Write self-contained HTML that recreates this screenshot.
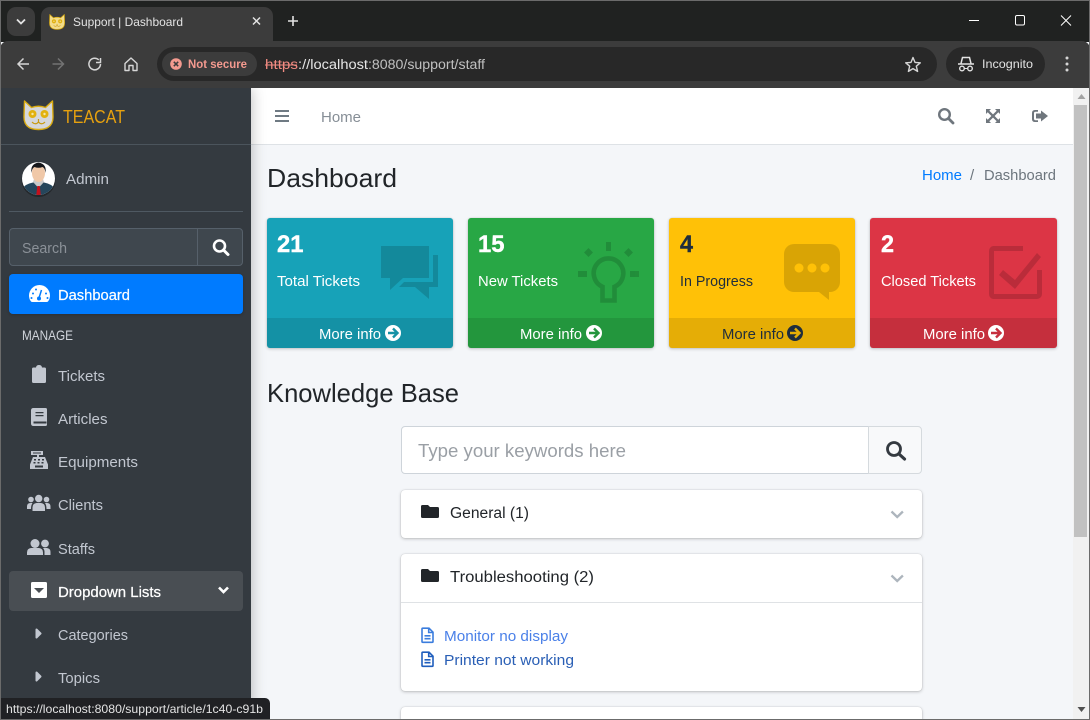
<!DOCTYPE html>
<html lang="en">
<head>
<meta charset="utf-8">
<title>Support | Dashboard</title>
<style>
html,body{margin:0;padding:0;width:1090px;height:720px;overflow:hidden;background:#f4f6f9}
#w{position:relative;width:1090px;height:720px;overflow:hidden}
.b{position:absolute;box-sizing:border-box}
svg.o{position:absolute;left:0;top:0;display:block;font-family:"Liberation Sans",sans-serif}
.card{border-radius:3px;box-shadow:0 0 1px rgba(0,0,0,.2),0 1px 3px rgba(0,0,0,.2);overflow:hidden}
.card i{position:absolute;left:0;right:0;top:100px;bottom:0;background:rgba(0,0,0,.1)}
.kb{background:#fff;border-radius:4px;box-shadow:0 0 1px rgba(0,0,0,.22),0 1px 3px rgba(0,0,0,.22)}
</style>
</head>
<body>
<div id="w">
<!-- page -->
<div class="b" style="left:0;top:88px;width:1073px;height:632px;background:#f4f6f9"></div>
<div class="b" style="left:251px;top:88px;width:822px;height:57px;background:#fff;border-bottom:1px solid #dee2e6"></div>

<!-- sidebar -->
<div class="b" style="left:0;top:88px;width:251px;height:632px;background:#343a40;box-shadow:0 0 14px rgba(0,0,0,.28)"></div>

<!-- browser chrome -->
<div class="b" style="left:0;top:0;width:1090px;height:42px;background:#202221"></div>
<div class="b" style="left:7px;top:7px;width:28px;height:29px;background:#3c3c3c;border-radius:9px"></div>
<div class="b" style="left:41px;top:7px;width:232px;height:36px;background:#3c3c3c;border-radius:9px 9px 0 0"></div>
<div class="b" style="left:0;top:41px;width:1090px;height:47px;background:#3c3c3c;border-radius:8px 8px 0 0"></div>
<div class="b" style="left:157px;top:47px;width:780px;height:34px;background:#282828;border-radius:17px"></div>
<div class="b" style="left:162px;top:52px;width:95px;height:24px;background:#3c3c3c;border-radius:12px"></div>
<div class="b" style="left:946px;top:47px;width:99px;height:34px;background:#282828;border-radius:17px"></div>

<!-- sidebar parts -->
<div class="b" style="left:1px;top:144px;width:250px;height:1px;background:#4b545c"></div>
<div class="b" style="left:9px;top:211px;width:234px;height:1px;background:#4f5962"></div>
<div class="b" style="left:9px;top:228px;width:234px;height:38px;background:#3f474e;border:1px solid #56606a;border-radius:4px"></div>
<div class="b" style="left:197px;top:228px;width:1px;height:38px;background:#56606a"></div>
<div class="b" style="left:9px;top:274px;width:234px;height:40px;background:#007bff;border-radius:4px;box-shadow:0 1px 3px rgba(0,0,0,.2)"></div>
<div class="b" style="left:9px;top:571px;width:234px;height:40px;background:#494e53;border-radius:4px"></div>

<!-- small boxes -->
<div class="b card" style="left:267px;top:218px;width:186px;height:130px;background:#17a2b8"><i></i></div>
<div class="b card" style="left:468px;top:218px;width:186px;height:130px;background:#28a745"><i></i></div>
<div class="b card" style="left:669px;top:218px;width:186px;height:130px;background:#ffc107"><i></i></div>
<div class="b card" style="left:870px;top:218px;width:187px;height:130px;background:#dc3545"><i></i></div>

<!-- knowledge base -->
<div class="b" style="left:401px;top:426px;width:468px;height:48px;background:#fff;border:1px solid #ced4da;border-radius:4px 0 0 4px"></div>
<div class="b" style="left:868px;top:426px;width:54px;height:48px;background:#f8f9fa;border:1px solid #d5dade;border-radius:0 4px 4px 0"></div>
<div class="b kb" style="left:401px;top:490px;width:521px;height:48px"></div>
<div class="b kb" style="left:401px;top:554px;width:521px;height:137px"></div>
<div class="b" style="left:401px;top:602px;width:521px;height:1px;background:#dfe2e5"></div>
<div class="b kb" style="left:401px;top:707px;width:521px;height:13px;border-radius:4px 4px 0 0"></div>

<!-- scrollbar -->
<div class="b" style="left:1073px;top:88px;width:16px;height:632px;background:#f1f1f1"></div>
<div class="b" style="left:1074px;top:105px;width:13px;height:432px;background:#c1c1c1"></div>

<!-- status bubble -->
<div class="b" style="left:0;top:698px;width:270px;height:22px;background:#202124;border-radius:0 5px 0 0"></div>

<svg class="o" width="1090" height="720" viewBox="0 0 1090 720" xmlns="http://www.w3.org/2000/svg">
<defs>
<g id="cat">
  <path d="M1.500 1 L8.500 7.500 Q15.500 5 22.500 7.500 L29.500 1 L30 17 Q30 29.500 15.500 29.500 Q1 29.500 1 17 Z" fill="currentColor" stroke="#d9ab12" stroke-width="1.400" stroke-linejoin="round"/>
  <circle cx="9.500" cy="14" r="4" fill="#e2b10f"/><circle cx="21.500" cy="14" r="4" fill="#e2b10f"/>
  <circle cx="9.500" cy="14" r="1.200" fill="#f5e7a8"/><circle cx="21.500" cy="14" r="1.200" fill="#f5e7a8"/>
  <path d="M15.500 19v3M9 22q3.500 3.500 6.500 0q3 3.500 6.500 0" fill="none" stroke="#c99a10" stroke-width="1.200"/>
</g>
<g id="fold"><path d="M0 1.500A1.500 1.500 0 0 1 1.500 0H7l2 2h7.500A1.500 1.500 0 0 1 18 3.500v8A1.500 1.500 0 0 1 16.500 13h-15A1.500 1.500 0 0 1 0 11.500Z"/></g>
<g id="filei" fill="none" stroke-width="1.600"><path d="M1 1.500Q1 .7 1.800 .7H8L12 4.700V14Q12 14.800 11.200 14.800H1.800Q1 14.800 1 14Z"/><path d="M7.700 1V5H11.700M3.500 8.300H9.500M3.500 11.200H9.500"/></g>
</defs>

<!-- tab strip -->
<path d="M17 19.500l4 4 4-4" fill="none" stroke="#e3e3e3" stroke-width="1.800"/>
<g transform="translate(49,14) scale(.52)" color="#f3dc8a"><use href="#cat"/></g>
<text x="73" y="26" font-size="12" fill="#e3e3e3" textLength="110" lengthAdjust="spacingAndGlyphs">Support | Dashboard</text>
<path d="M253 17.500l7 7m0-7l-7 7" stroke="#e3e3e3" stroke-width="1.500" fill="none"/>
<path d="M293 16v10M288 21h10" stroke="#e3e3e3" stroke-width="1.600" fill="none"/>
<path d="M969 20.500h10" stroke="#fff" stroke-width="1"/>
<rect x="1015.500" y="15.500" width="9" height="9.500" rx="1.500" fill="none" stroke="#fff"/>
<path d="M1061 15.500l10 10m0-10l-10 10" stroke="#fff" stroke-width="1" fill="none"/>

<!-- toolbar -->
<path d="M29 64H18.500M23.500 58.500L18 64l5.500 5.500" fill="none" stroke="#d6d6d6" stroke-width="1.500"/>
<path d="M52.500 64H63M58 58.500L63.500 64 58 69.500" fill="none" stroke="#737373" stroke-width="1.500"/>
<path d="M100.500 64a5.800 5.800 0 1 1-1.700-4.100M100.500 58v4.500H96" fill="none" stroke="#d6d6d6" stroke-width="1.500"/>
<path d="M125 63.500L131 58l6 5.500V70.500H133V65.500H129V70.500H125Z" fill="none" stroke="#d6d6d6" stroke-width="1.400" stroke-linejoin="round"/>
<circle cx="176" cy="64" r="5.800" fill="#f49a8f"/><path d="M173.800 61.800l4.400 4.400m0-4.400l-4.400 4.400" stroke="#3c3c3c" stroke-width="1.500"/>
<text x="188" y="68" font-size="11.500" font-weight="bold" fill="#f49a8f" textLength="59" lengthAdjust="spacingAndGlyphs">Not secure</text>
<text x="265" y="69" font-size="13.500" fill="#f28b82" textLength="33" lengthAdjust="spacingAndGlyphs">https</text>
<path d="M265 65h32" stroke="#f28b82" stroke-width="1"/>
<text x="298" y="69" font-size="13.500" fill="#e6e6e6" textLength="70" lengthAdjust="spacingAndGlyphs">://localhost</text>
<text x="368" y="69" font-size="13.500" fill="#c0c0c0" textLength="117" lengthAdjust="spacingAndGlyphs">:8080/support/staff</text>
<path d="M913 57.500l2 4.900 5.300.4-4 3.400 1.300 5.200-4.600-2.800-4.600 2.800 1.300-5.200-4-3.400 5.300-.4Z" fill="none" stroke="#d6d6d6" stroke-width="1.400" stroke-linejoin="round"/>
<path d="M958 64h16M961 63.500l1.500-6h7l1.500 6" fill="none" stroke="#e3e3e3" stroke-width="1.500"/>
<circle cx="962" cy="68.500" r="2.300" fill="none" stroke="#e3e3e3" stroke-width="1.400"/><circle cx="970" cy="68.500" r="2.300" fill="none" stroke="#e3e3e3" stroke-width="1.400"/><path d="M964.300 68.500h3.400" stroke="#e3e3e3"/>
<text x="982" y="68" font-size="12" fill="#e3e3e3" textLength="51" lengthAdjust="spacingAndGlyphs">Incognito</text>
<circle cx="1067" cy="58" r="1.500" fill="#d6d6d6"/><circle cx="1067" cy="64" r="1.500" fill="#d6d6d6"/><circle cx="1067" cy="70" r="1.500" fill="#d6d6d6"/>

<!-- brand -->
<g transform="translate(23,100)" color="#d6d7da"><use href="#cat"/></g>
<text x="63" y="123" font-size="18.500" fill="#e5a00f" textLength="62" lengthAdjust="spacingAndGlyphs">TEACAT</text>

<!-- user -->
<circle cx="38.500" cy="180" r="17" fill="#000" opacity=".3"/>
<clipPath id="av"><circle cx="38.500" cy="178.500" r="16.500"/></clipPath>
<g clip-path="url(#av)">
  <rect x="22" y="162" width="33" height="33" fill="#fff"/>
  <path d="M22 195v-6q3-5 11-6.500h11q8 1.500 11 6.500v6Z" fill="#25465c"/>
  <path d="M33 182l5.500 6 5.500-6-1-3h-9Z" fill="#c9c9c9"/>
  <path d="M37.300 186h2.500l1 9h-4.500Z" fill="#c4101c"/>
  <ellipse cx="38.500" cy="173" rx="6.500" ry="9" fill="#f0c8a8"/>
  <path d="M31.500 173q-1.500-9 7-10.500q8.500 1.500 7 10.500q-.5-5-3-6q-4 1.500-8 0q-2.500 1-3 6Z" fill="#15161a"/>
</g>
<text x="66" y="184" font-size="15" fill="#c2c7d0" textLength="43" lengthAdjust="spacingAndGlyphs">Admin</text>

<!-- sidebar search -->
<text x="22" y="253" font-size="15" fill="#8b9198" textLength="45" lengthAdjust="spacingAndGlyphs">Search</text>
<circle cx="219.500" cy="246" r="5.500" fill="none" stroke="#fff" stroke-width="2.600"/><path d="M223.500 250l4.500 4.500" stroke="#fff" stroke-width="3" stroke-linecap="round"/>

<!-- dashboard item -->
<path d="M39.500 285a10.500 10.500 0 0 0-10.500 10.500q0 3.500 2 6q.5.500 1.500.5h14q1 0 1.500-.5q2-2.500 2-6A10.500 10.500 0 0 0 39.500 285Z" fill="#fff"/>
<path d="M39 298l2.500-8" stroke="#007bff" stroke-width="1.500"/><circle cx="39" cy="298.500" r="2" fill="#007bff"/>
<circle cx="33" cy="293.500" r="1" fill="#007bff"/><circle cx="36" cy="289.500" r="1" fill="#007bff"/><circle cx="46" cy="293.500" r="1" fill="#007bff"/><circle cx="31.500" cy="298" r="1" fill="#007bff"/><circle cx="47.500" cy="298" r="1" fill="#007bff"/>
<text x="58" y="300" font-size="15" fill="#fff" stroke="#fff" stroke-width=".2" textLength="72" lengthAdjust="spacingAndGlyphs">Dashboard</text>

<text x="22" y="340" font-size="14" fill="#d0d4db" textLength="51" lengthAdjust="spacingAndGlyphs">MANAGE</text>

<!-- nav icons -->
<g fill="#c2c7d0">
  <path d="M33.500 367.500h2.500q.3-2.500 3-2.500t3 2.500h2.500q1.500 0 1.500 1.500v12.500q0 1.500-1.500 1.500h-11q-1.500 0-1.500-1.500V369q0-1.500 1.500-1.500Z"/>
  <path fill-rule="evenodd" d="M33.500 408h12q1.500 0 1.500 1.500v15q0 1.500-1.500 1.500h-12q-2.500 0-2.500-2.500v-13q0-2.500 2.500-2.500ZM35.500 412v1.200h8V412ZM35.500 415v1.200h8V415ZM33.500 421.500v2h13v-2Z"/>
  <path fill-rule="evenodd" d="M31 451h12v4h-4v2h6l3 7.500v4.500H30v-4.500l3-7.500h4v-2h-6ZM33 452.500v1h8v-1ZM34 459v1.500h2V459ZM38 459v1.500h2V459ZM42 459v1.500h2V459ZM33.500 462v1.500h2V462ZM37.500 462v1.500h2V462ZM41.500 462v1.500h2V462ZM35 465.500v2h8v-2Z"/>
  <circle cx="31" cy="499.500" r="2.800"/><circle cx="46.500" cy="499.500" r="2.800"/><circle cx="38.700" cy="498.500" r="3.700"/>
  <path d="M27 509v-2.500q0-3.500 3.500-3.500h2q-1.500 2-1.500 6ZM50.500 509v-2.500q0-3.500-3.500-3.500h-2q1.500 2 1.500 6ZM32.500 511v-3.500q0-4 4-4.500h4.500q4 .5 4 4.500v3.500Z"/>
  <circle cx="35" cy="543.500" r="4.500"/><circle cx="45" cy="543.500" r="3.900"/>
  <path d="M27 555v-2.500q0-4 4-4.500h8q4 .5 4 4.500v2.500ZM44.500 555v-3q0-2.500-1.500-4h4q3.500 .5 3.500 4v3Z"/>
  <path d="M36.500 629.500l4 4-4 4Z" stroke="#c2c7d0" stroke-width="2" stroke-linejoin="round"/>
  <path d="M36.500 672.500l4 4-4 4Z" stroke="#c2c7d0" stroke-width="2" stroke-linejoin="round"/>
</g>
<path fill-rule="evenodd" d="M32.500 582h13q1.500 0 1.500 1.500v13q0 1.500-1.500 1.500h-13q-1.500 0-1.500-1.500v-13q0-1.500 1.500-1.500ZM34 588l5 5 5-5Z" fill="#fff"/>
<path d="M219 587.500l4.500 4.500 4.500-4.500" fill="none" stroke="#fff" stroke-width="2.600"/>

<g font-size="15" fill="#c2c7d0">
  <text x="58" y="381" textLength="47" lengthAdjust="spacingAndGlyphs">Tickets</text>
  <text x="58" y="424" textLength="49.500" lengthAdjust="spacingAndGlyphs">Articles</text>
  <text x="58" y="467" textLength="80" lengthAdjust="spacingAndGlyphs">Equipments</text>
  <text x="58" y="510" textLength="45" lengthAdjust="spacingAndGlyphs">Clients</text>
  <text x="58" y="554" textLength="37" lengthAdjust="spacingAndGlyphs">Staffs</text>
  <text x="58" y="640" textLength="70" lengthAdjust="spacingAndGlyphs">Categories</text>
  <text x="58" y="683" textLength="42" lengthAdjust="spacingAndGlyphs">Topics</text>
</g>
<text x="58" y="597" font-size="15" fill="#fff" stroke="#fff" stroke-width=".25" textLength="103" lengthAdjust="spacingAndGlyphs">Dropdown Lists</text>

<!-- top nav -->
<path d="M275 111h14M275 116h14M275 121h14" stroke="#6f7a83" stroke-width="2"/>
<text x="321" y="122" font-size="15" fill="#868e96" textLength="40" lengthAdjust="spacingAndGlyphs">Home</text>
<circle cx="944.500" cy="114.500" r="5.300" fill="none" stroke="#6f767d" stroke-width="2.400"/><path d="M948.500 118.500l4.500 4.500" stroke="#6f767d" stroke-width="2.800" stroke-linecap="round"/>
<g fill="#6f767d">
  <path d="M986 109h5l-1.700 1.700 3.700 3.700 3.700-3.700L995 109h5v5l-1.700-1.700-3.700 3.700 3.700 3.700 1.700-1.700v5h-5l1.700-1.700-3.700-3.700-3.700 3.700 1.700 1.700h-5v-5l1.700 1.700 3.700-3.700-3.700-3.700L986 114Z"/>
  <path d="M1041 110.500l7 5.500-7 5.500v-3h-5v-5h5Z"/>
  <path d="M1038 110v1.800h-2.500q-1.500 0-1.500 1.400v5.600q0 1.400 1.500 1.400h2.500v1.800h-3q-3 0-3-3v-6q0-3 3-3Z"/>
</g>

<!-- headers -->
<text x="267" y="187" font-size="26" fill="#212529" textLength="130" lengthAdjust="spacingAndGlyphs">Dashboard</text>
<text x="922" y="180" font-size="15" fill="#007bff" textLength="40" lengthAdjust="spacingAndGlyphs">Home</text>
<text x="970" y="180" font-size="15" fill="#6c757d">/</text>
<text x="984" y="180" font-size="15" fill="#6c757d" textLength="72" lengthAdjust="spacingAndGlyphs">Dashboard</text>

<!-- small box contents -->
<g font-weight="bold" font-size="24.500" stroke-width=".4">
  <text x="277" y="252" fill="#fff" stroke="#fff" textLength="26.500" lengthAdjust="spacingAndGlyphs">21</text>
  <text x="478" y="252" fill="#fff" stroke="#fff" textLength="26.500" lengthAdjust="spacingAndGlyphs">15</text>
  <text x="680" y="252" fill="#1f2d3d" stroke="#1f2d3d" textLength="13" lengthAdjust="spacingAndGlyphs">4</text>
  <text x="881" y="252" fill="#fff" stroke="#fff" textLength="13" lengthAdjust="spacingAndGlyphs">2</text>
</g>
<g font-size="15">
  <text x="277" y="286" fill="#fff" textLength="83" lengthAdjust="spacingAndGlyphs">Total Tickets</text>
  <text x="478" y="286" fill="#fff" textLength="80" lengthAdjust="spacingAndGlyphs">New Tickets</text>
  <text x="680" y="286" fill="#1f2d3d" textLength="73" lengthAdjust="spacingAndGlyphs">In Progress</text>
  <text x="881" y="286" fill="#fff" textLength="95" lengthAdjust="spacingAndGlyphs">Closed Tickets</text>
  <text x="319" y="339" fill="#fff" textLength="62" lengthAdjust="spacingAndGlyphs">More info</text>
  <text x="520" y="339" fill="#fff" textLength="62" lengthAdjust="spacingAndGlyphs">More info</text>
  <text x="722" y="339" fill="#1f2d3d" textLength="62" lengthAdjust="spacingAndGlyphs">More info</text>
  <text x="923" y="339" fill="#fff" textLength="62" lengthAdjust="spacingAndGlyphs">More info</text>
</g>
<circle cx="393" cy="333" r="8" fill="#fff"/><path d="M388 333h9M393 328.500l4.500 4.500-4.500 4.500" fill="none" stroke="#1592a6" stroke-width="2.400"/>
<circle cx="594" cy="333" r="8" fill="#fff"/><path d="M589 333h9M594 328.500l4.500 4.500-4.500 4.500" fill="none" stroke="#24963e" stroke-width="2.400"/>
<circle cx="795" cy="333" r="8" fill="#1f2d3d"/><path d="M790 333h9M795 328.500l4.500 4.500-4.500 4.500" fill="none" stroke="#e6ae06" stroke-width="2.400"/>
<circle cx="996" cy="333" r="8" fill="#fff"/><path d="M991 333h9M996 328.500l4.500 4.500-4.500 4.500" fill="none" stroke="#c62f3e" stroke-width="2.400"/>

<!-- decorative box icons -->
<g opacity=".15">
  <path d="M381 246h48v32h-26l-13 12v-12h-9Z"/>
  <path d="M433 255h5v32h-9v12l-14-12h-16l5-5h29Z"/>
  <rect x="606" y="242" width="5" height="9"/><rect x="578" y="271" width="9" height="6"/><rect x="630" y="271" width="9" height="6"/>
  <path d="M588.500 248l4.500 4.500-4.500 4.500-4.500-4.500ZM628.500 248l4.500 4.500-4.500 4.500-4.500-4.500Z"/>
  <path d="M602.500 286.800a14.800 14.800 0 1 1 12 0V300.500h-12Z" fill="none" stroke="#000" stroke-width="4.600"/>
  <path fill-rule="evenodd" d="M794 244h36a10 10 0 0 1 10 10v28a10 10 0 0 1-10 10h-1v8l-10-8h-25a10 10 0 0 1-10-10v-28a10 10 0 0 1 10-10ZM799 263.500a4.500 4.500 0 1 0 .01 0ZM812 263.500a4.500 4.500 0 1 0 .01 0ZM825 263.500a4.500 4.500 0 1 0 .01 0Z"/>
  <path d="M993 246h30v5h-29v43h43v-24h5v24a5 5 0 0 1-5 5h-44a5 5 0 0 1-4-5v-43a5 5 0 0 1 4-5Z"/>
  <path d="M1003 270l12 10 22-27 4 4-26 32-16-14Z"/>
</g>

<!-- knowledge base contents -->
<text x="267" y="402" font-size="26" fill="#212529" textLength="192" lengthAdjust="spacingAndGlyphs">Knowledge Base</text>
<text x="418" y="457" font-size="18.500" fill="#9a9fa5" textLength="208" lengthAdjust="spacingAndGlyphs">Type your keywords here</text>
<circle cx="894" cy="449" r="6.500" fill="none" stroke="#343a40" stroke-width="2.800"/><path d="M899 454l5.500 5" stroke="#343a40" stroke-width="3.200" stroke-linecap="round"/>

<g fill="#212529"><use href="#fold" transform="translate(421,505)"/><use href="#fold" transform="translate(421,569)"/></g>
<text x="450" y="518" font-size="15.500" fill="#212529" textLength="79" lengthAdjust="spacingAndGlyphs">General (1)</text>
<text x="450" y="582" font-size="15.500" fill="#212529" textLength="144" lengthAdjust="spacingAndGlyphs">Troubleshooting (2)</text>
<path d="M891.500 511.500l5.700 5.500 5.700-5.500" fill="none" stroke="#adb5bd" stroke-width="2.300"/>
<path d="M891.500 575.500l5.700 5.500 5.700-5.500" fill="none" stroke="#adb5bd" stroke-width="2.300"/>
<use href="#filei" transform="translate(421,627.500)" stroke="#3b7ddd"/>
<use href="#filei" transform="translate(421,651.500)" stroke="#1f5ebd"/>
<text x="444" y="641" font-size="15" fill="#4a80e8" textLength="124" lengthAdjust="spacingAndGlyphs">Monitor no display</text>
<text x="444" y="665" font-size="15" fill="#2a5fb5" textLength="130" lengthAdjust="spacingAndGlyphs">Printer not working</text>

<!-- scrollbar arrows -->
<path d="M1081.500 94l4 5h-8Z" fill="#a3a3a3"/>
<path d="M1081.500 712l4-5h-8Z" fill="#505050"/>

<!-- status text -->
<text x="6" y="713" font-size="12" fill="#e3e3e3" textLength="257" lengthAdjust="spacingAndGlyphs">https://localhost:8080/support/article/1c40-c91b</text>

<!-- window frame -->
<rect x=".5" y=".5" width="1089" height="719" fill="none" stroke="#6b6b6b"/>
</svg>
</div>
</body>
</html>
